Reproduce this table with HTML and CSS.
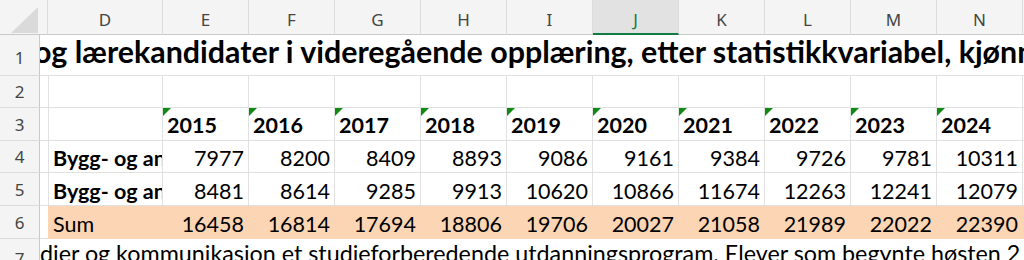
FILE: index.html
```html
<!DOCTYPE html>
<html lang="no">
<head>
<meta charset="utf-8">
<title>Sheet</title>
<link rel="stylesheet" href="styles.css">
</head>
<body>
<div class="sheet">
  <!-- header row -->
  <div class="corner"><span class="tri"></span></div>
  <div class="colhdr"></div>
  <div class="colhdr">D</div>
  <div class="colhdr">E</div>
  <div class="colhdr">F</div>
  <div class="colhdr">G</div>
  <div class="colhdr">H</div>
  <div class="colhdr">I</div>
  <div class="colhdr sel">J</div>
  <div class="colhdr">K</div>
  <div class="colhdr">L</div>
  <div class="colhdr">M</div>
  <div class="colhdr">N</div>
  <div class="colhdr last"></div>

  <!-- row 1 -->
  <div class="rowhdr r1">1</div>
  <div class="cell title">og lærekandidater i videregående opplæring, etter statistikkvariabel, kjønn</div>

  <!-- row 2 -->
  <div class="rowhdr">2</div>
  <div class="cell"></div><div class="cell"></div>
  <div class="cell"></div><div class="cell"></div><div class="cell"></div><div class="cell"></div><div class="cell"></div>
  <div class="cell"></div><div class="cell"></div><div class="cell"></div><div class="cell"></div><div class="cell"></div>
  <div class="cell last"></div>

  <!-- row 3 -->
  <div class="rowhdr">3</div>
  <div class="cell"></div><div class="cell"></div>
  <div class="cell yr">2015</div><div class="cell yr">2016</div><div class="cell yr">2017</div><div class="cell yr">2018</div><div class="cell yr">2019</div>
  <div class="cell yr">2020</div><div class="cell yr">2021</div><div class="cell yr">2022</div><div class="cell yr">2023</div><div class="cell yr">2024</div>
  <div class="cell last"></div>

  <!-- row 4 -->
  <div class="rowhdr">4</div>
  <div class="cell"></div><div class="cell lbl">Bygg- og an</div>
  <div class="cell num">7977</div><div class="cell num">8200</div><div class="cell num">8409</div><div class="cell num">8893</div><div class="cell num">9086</div>
  <div class="cell num">9161</div><div class="cell num">9384</div><div class="cell num">9726</div><div class="cell num">9781</div><div class="cell num">10311</div>
  <div class="cell last"></div>

  <!-- row 5 -->
  <div class="rowhdr">5</div>
  <div class="cell"></div><div class="cell lbl">Bygg- og an</div>
  <div class="cell num">8481</div><div class="cell num">8614</div><div class="cell num">9285</div><div class="cell num">9913</div><div class="cell num">10620</div>
  <div class="cell num">10866</div><div class="cell num">11674</div><div class="cell num">12263</div><div class="cell num">12241</div><div class="cell num">12079</div>
  <div class="cell last"></div>

  <!-- row 6 -->
  <div class="rowhdr">6</div>
  <div class="cell"></div><div class="cell fill sum">Sum</div>
  <div class="cell fill num">16458</div><div class="cell fill num">16814</div><div class="cell fill num">17694</div><div class="cell fill num">18806</div><div class="cell fill num">19706</div>
  <div class="cell fill num">20027</div><div class="cell fill num">21058</div><div class="cell fill num">21989</div><div class="cell fill num">22022</div><div class="cell fill num">22390</div>
  <div class="cell fill last"></div>

  <!-- row 7 -->
  <div class="rowhdr">7</div>
  <div class="cell note">dier og kommunikasjon et studieforberedende utdanningsprogram. Elever som begynte høsten 2</div>
</div>
</body>
</html>
```

FILE: styles.css
```css
html, body {
  margin: 0;
  padding: 0;
  background: #ffffff;
  overflow: hidden;
}

.sheet {
  display: grid;
  grid-template-columns: 40px 8px 115px repeat(10, 86px) 1fr;
  grid-template-rows: 35px 41px 32px 33px 32px 33px 33px 40px;
  width: 1024px;
  font-family: Lato, "Liberation Sans", sans-serif;
  font-size: 21.5px;
  color: #000;
}

.sheet > div {
  box-sizing: border-box;
  overflow: hidden;
  white-space: nowrap;
  min-width: 0;
}

/* headers */
.corner {
  position: relative;
  background: #f4f4f4;
  border-bottom: 1px solid #c9c9c9;
}
.corner .tri {
  position: absolute;
  left: 11px;
  top: 7px;
  width: 27px;
  height: 26px;
  background: #dadada;
  clip-path: polygon(100% 0, 100% 100%, 0 100%);
}

.colhdr {
  background: #f4f4f4;
  border-right: 1px solid #dcdcdc;
  border-bottom: 1px solid #c9c9c9;
  font-family: "Noto Sans", "Open Sans", sans-serif;
  font-size: 17px;
  color: #444;
  display: flex;
  justify-content: center;
  align-items: flex-end;
  padding-bottom: 3px;
}
.colhdr.sel {
  background: #e2e2e2;
  color: #107c41;
  border-bottom: 2px solid #107c41;
  padding-bottom: 2px;
}
.colhdr.last { border-right: none; }

.rowhdr {
  background: #f4f4f4;
  border-right: 1px solid #c9c9c9;
  border-bottom: 1px solid #dcdcdc;
  font-family: "Noto Sans", "Open Sans", sans-serif;
  font-size: 17px;
  color: #444;
  display: flex;
  justify-content: center;
  align-items: center;
}
.rowhdr.r1 { padding-top: 4px; }

/* cells */
.cell {
  border-right: 1px solid #e1e1e1;
  border-bottom: 1px solid #e1e1e1;
  display: flex;
  align-items: flex-end;
  padding: 0 4px 1px 4px;
}
.cell.last { border-right: none; }

.title {
  grid-column: 2 / -1;
  border-right: none;
  font-weight: 700;
  font-size: 30.4px;
  padding: 0 0 6px 0;
  text-indent: -6px;
}

.yr {
  position: relative;
  font-weight: 700;
  padding-bottom: 2px;
}
.yr::before {
  content: "";
  position: absolute;
  left: 0;
  top: 0;
  width: 8px;
  height: 8px;
  background: #118a11;
  clip-path: polygon(0 0, 100% 0, 0 100%);
}

.lbl {
  font-weight: 700;
  padding-left: 5px;
}

.num {
  justify-content: flex-end;
  padding-right: 4px;
}

.fill {
  background: #fcd5b4;
  border-color: #fcd5b4;
}
.sum { padding-left: 5px; }

.note {
  grid-column: 2 / -1;
  border: none;
  align-items: flex-start;
  font-size: 23.3px;
  padding: 0;
}
```
